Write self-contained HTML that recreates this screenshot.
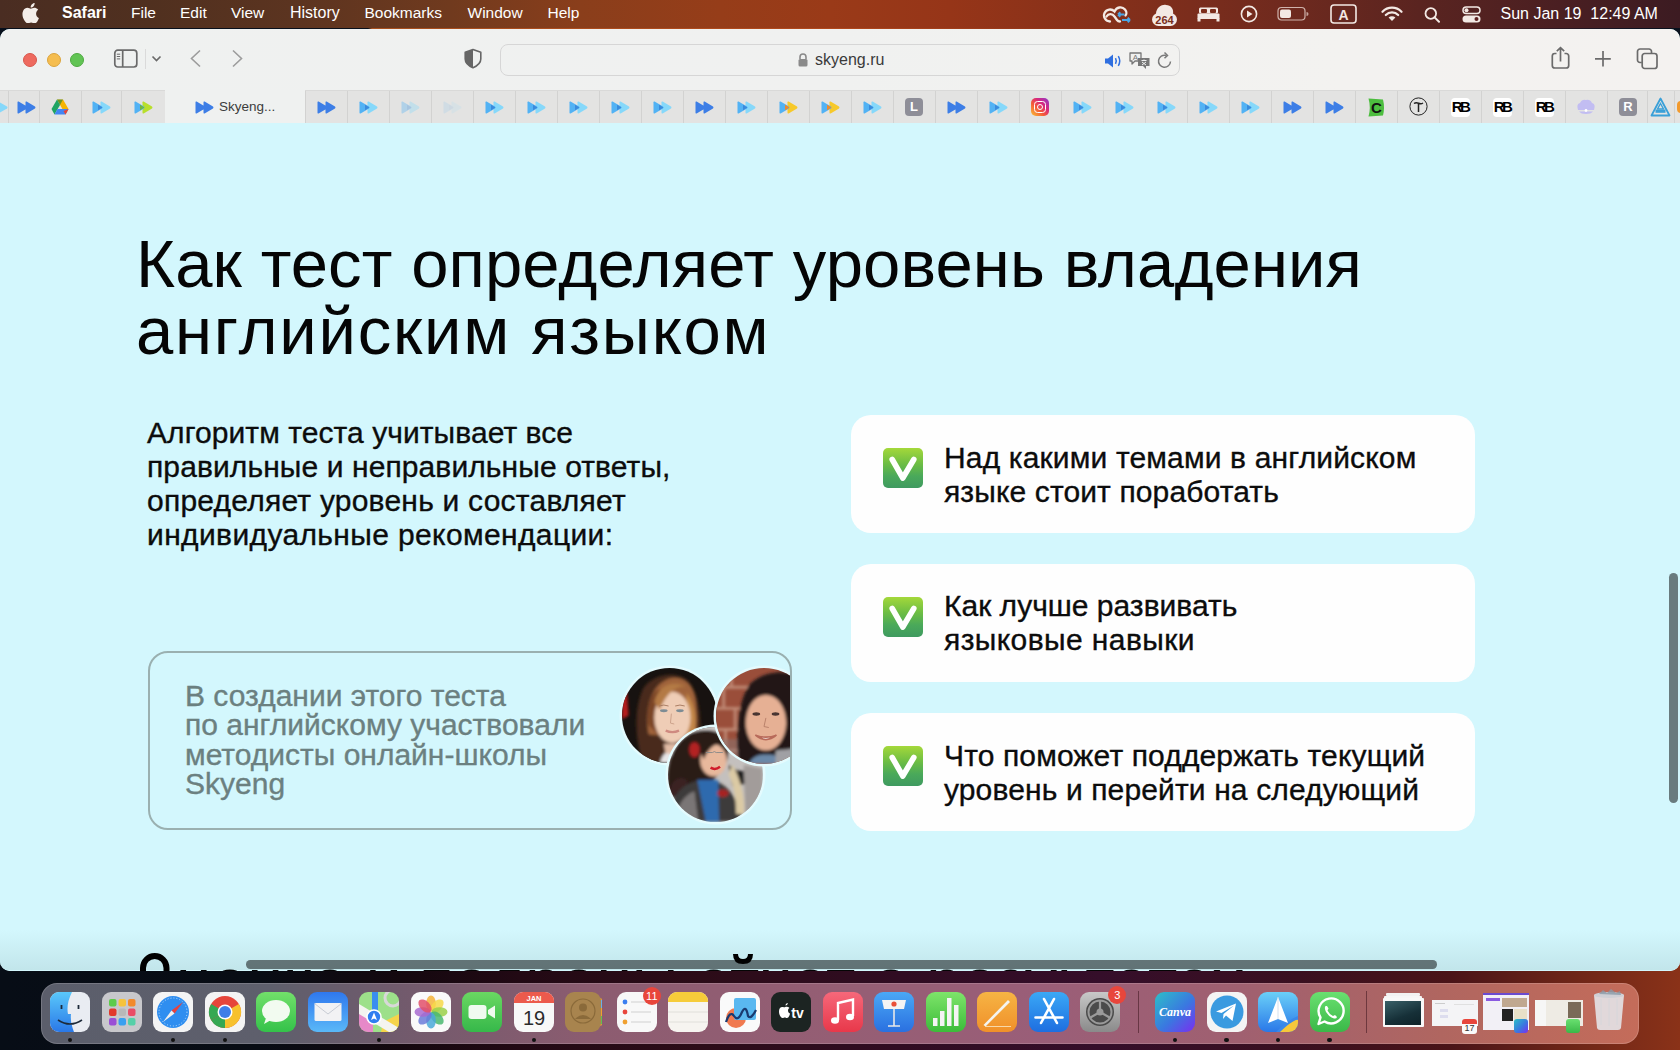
<!DOCTYPE html>
<html><head><meta charset="utf-8">
<style>
*{margin:0;padding:0;box-sizing:border-box}
html,body{width:1680px;height:1050px;overflow:hidden;font-family:"Liberation Sans",sans-serif}
body{position:relative;background:#0b121c}
.abs{position:absolute}
#wall{position:absolute;left:0;top:0;width:1680px;height:1050px;background:linear-gradient(90deg,#070d16 0px,#080c14 260px,#14080f 400px,#220914 520px,#2c0c18 700px,#300c22 900px,#350e2a 1100px,#3a1020 1300px,#4a1418 1450px,#6a2418 1560px,#8a3218 1680px)}
#menubar{position:absolute;left:0;top:0;width:1680px;height:28px;
 background:linear-gradient(90deg,#4a2d22 0px,#50301f 150px,#5c3420 300px,#703a1e 450px,#8a3e1b 580px,#963d19 720px,#9a3a18 830px,#963518 950px,#86301a 1100px,#702a1e 1280px,#5a2420 1420px,#4a1f22 1560px,#3c1b22 1680px);color:#fff;font-size:15.5px}
#menubar .m{position:absolute;top:4.3px;line-height:18px}
#win{position:absolute;left:0;top:29px;width:1680px;height:942px;border-radius:10px 10px 10px 10px;overflow:hidden;background:#d3f7fd}
#toolbar{position:absolute;left:0;top:0;width:1680px;height:61px;background:linear-gradient(90deg,#eff1f0,#f0f1f0 50%,#f3f2f0 80%,#f4f2f0)}
#tabbar{position:absolute;left:0;top:61px;width:1680px;height:33px;background:#e3e3e2;border-top:1px solid #d9d9d8}
#content{position:absolute;left:0;top:94px;width:1680px;height:848px;background:#d3f7fd;overflow:hidden}
#dock{position:absolute;left:41px;top:982.5px;width:1597.5px;height:61.5px;border-radius:16px;background:linear-gradient(90deg,#5b5e6b 0px,#5e5f6c 230px,#705a6c 350px,#8c5c70 550px,#955e74 800px,#9a5e78 1000px,#a06070 1200px,#b06660 1400px,#c46c5a 1597px);border:1px solid rgba(255,255,255,0.16);background-origin:border-box}

.h1{position:absolute;font-size:67px;line-height:67px;color:#050505;white-space:nowrap}
.p{position:absolute;font-size:30px;line-height:34px;color:#0c0c0c;-webkit-text-stroke:0.35px #0c0c0c;white-space:nowrap}
.card{position:absolute;width:624px;height:118px;border-radius:20px;background:#fefefe}
.chk{position:absolute;left:32px;top:33px;width:40px;height:40px;border-radius:5px;background:linear-gradient(180deg,#a4d83a 0%,#6cbd44 40%,#4aa95a 70%,#3f9a60 100%)}
.chk svg{position:absolute;left:0;top:0}
.ct{position:absolute;left:93px;top:25.6px;font-size:30px;line-height:34px;color:#0c0c0c;-webkit-text-stroke:0.35px #0c0c0c;white-space:nowrap}
.abox{position:absolute;width:644px;height:179px;border-radius:20px;border:2px solid #9ab0b0;overflow:hidden}
.at{position:absolute;left:35px;top:27.6px;-webkit-text-stroke:0.35px #6b8080;font-size:30px;line-height:29.5px;color:#6b8080;white-space:nowrap}
.ph{position:absolute;border-radius:50%;overflow:hidden;box-shadow:0 0 0 2.5px #e4fbfe}
</style></head>
<body>
<svg width="0" height="0" style="position:absolute"><defs>
<g id="ffd"><path d="M0.5 1.2 Q0.5 0 1.6 0.6 L10 5.6 Q11 6.5 10 7.4 L1.6 12.4 Q0.5 13 0.5 11.8 Z M8.5 1.2 Q8.5 0 9.6 0.6 L18 5.6 Q19 6.5 18 7.4 L9.6 12.4 Q8.5 13 8.5 11.8 Z" fill="#3d7ee6"/></g>
<g id="ffl"><path d="M8.5 1.2 Q8.5 0 9.6 0.6 L18 5.6 Q19 6.5 18 7.4 L9.6 12.4 Q8.5 13 8.5 11.8 Z" fill="#86d8fa"/><path d="M0.5 1.2 Q0.5 0 1.6 0.6 L10 5.6 Q11 6.5 10 7.4 L1.6 12.4 Q0.5 13 0.5 11.8 Z" fill="#52b2f4"/><path d="M6 3.8 L10.5 6.5 L6 9.2 Z" fill="#3a8bdc"/></g>
<g id="ffy"><path d="M8.5 1.2 Q8.5 0 9.6 0.6 L18 5.6 Q19 6.5 18 7.4 L9.6 12.4 Q8.5 13 8.5 11.8 Z" fill="#f7c92a"/><path d="M0.5 1.2 Q0.5 0 1.6 0.6 L10 5.6 Q11 6.5 10 7.4 L1.6 12.4 Q0.5 13 0.5 11.8 Z" fill="#52b2f4"/><path d="M6 3.8 L10.5 6.5 L6 9.2 Z" fill="#f08a2a"/></g>
<g id="ffg"><path d="M8.5 1.2 Q8.5 0 9.6 0.6 L18 5.6 Q19 6.5 18 7.4 L9.6 12.4 Q8.5 13 8.5 11.8 Z" fill="#b8df2c"/><path d="M0.5 1.2 Q0.5 0 1.6 0.6 L10 5.6 Q11 6.5 10 7.4 L1.6 12.4 Q0.5 13 0.5 11.8 Z" fill="#52b2f4"/><path d="M6 3.8 L10.5 6.5 L6 9.2 Z" fill="#6fb840"/></g>
</defs></svg>
<div id="wall"></div>
<div class="abs" style="left:0;top:26px;width:1680px;height:16px;background:linear-gradient(90deg,#08101c 0px,#08101c 368px,#a8501e 372px,#b0481c 840px,#8a3018 1100px,#5a2020 1450px,#101424 1630px,#08101c 1680px)"></div>
<div id="menubar">
 <svg class="abs" style="left:22px;top:3px" width="17" height="20" viewBox="0 0 17 20"><path fill="#f4eeea" d="M14.1 10.6c0-2.5 2-3.7 2.1-3.8-1.2-1.7-3-1.9-3.6-2-1.5-.2-3 .9-3.8.9-.8 0-2-.9-3.3-.9C3.8 4.9 2.2 5.9 1.3 7.4c-1.8 3.2-.5 7.9 1.3 10.4.9 1.2 1.9 2.6 3.2 2.6 1.3-.1 1.8-.8 3.3-.8 1.6 0 2 .8 3.4.8 1.400 0 2.300-1.300 3.100-2.500.9-1.400 1.300-2.700 1.300-2.800-.1 0-2.800-1-2.800-4.500zM11.600 3.200c.7-.9 1.200-2 1-3.200-1 0-2.200.7-2.900 1.500-.6.700-1.200 1.900-1 3 1.100.1 2.200-.5 2.900-1.300z"/></svg>
 <div class="m" style="left:62px;font-weight:bold;font-size:16px;top:4.2px">Safari</div>
 <div class="m" style="left:131px">File</div>
 <div class="m" style="left:180px">Edit</div>
 <div class="m" style="left:231px">View</div>
 <div class="m" style="left:290px;font-size:16px;top:4.2px">History</div>
 <div class="m" style="left:364.5px">Bookmarks</div>
 <div class="m" style="left:467.5px">Window</div>
 <div class="m" style="left:547.5px">Help</div>
 <!-- right icons -->
 <svg class="abs" style="left:1102px;top:4px" width="30" height="20" viewBox="0 0 30 20">
  <path d="M8 17.5 A6 6 0 1 1 12.5 7.5 C14.5 3 20 2 23 5.5 C25 8 24.5 10.5 23.5 11.5" fill="none" stroke="#f3e9e4" stroke-width="2.3" stroke-linecap="round"/>
  <path d="M4.5 12.5 C6.5 9 10.5 9.5 12.5 12.5 L15 16 C16 17.5 17 17.5 18 17.5" fill="none" stroke="#f3e9e4" stroke-width="2.3" stroke-linecap="round"/>
  <path d="M16 10.5 h6.5 M16 10.5 l2.3 -2.2 M16 10.5 l2.3 2.2" stroke="#4aa6e6" stroke-width="1.9" fill="none"/>
  <path d="M20 16 h8 M28 16 l-2.3 -2.2 M28 16 l-2.3 2.2" stroke="#4aa6e6" stroke-width="1.9" fill="none"/>
 </svg>
 <svg class="abs" style="left:1151px;top:4px" width="28" height="23" viewBox="0 0 28 23">
  <path d="M5 10 C5 3 12 0 15 1 C20 1 23 5 22 10 Z" fill="#f3e9e4"/>
  <rect x="1" y="9" width="25" height="13" rx="6.5" fill="#f3e9e4"/>
  <text x="13.5" y="19.5" text-anchor="middle" font-family="Liberation Sans" font-weight="bold" font-size="11" fill="#7a2e1c">264</text>
 </svg>
 <svg class="abs" style="left:1197px;top:7px" width="23" height="15" viewBox="0 0 23 15">
  <rect x="2" y="0.5" width="19" height="6" rx="1.5" fill="#f3e9e4"/>
  <rect x="4" y="2" width="6" height="4" rx="1" fill="#7c2e1c"/>
  <rect x="13" y="2" width="6" height="4" rx="1" fill="#7c2e1c"/>
  <rect x="0.5" y="6.5" width="22" height="5.5" rx="1" fill="#f3e9e4"/>
  <rect x="0.5" y="11" width="3" height="3.5" fill="#f3e9e4"/>
  <rect x="19.5" y="11" width="3" height="3.5" fill="#f3e9e4"/>
 </svg>
 <svg class="abs" style="left:1240px;top:5px" width="18" height="18" viewBox="0 0 18 18">
  <circle cx="9" cy="9" r="7.6" fill="none" stroke="#f3e9e4" stroke-width="1.6"/>
  <path d="M7 5.5 L12.5 9 L7 12.5 Z" fill="#f3e9e4"/>
 </svg>
 <svg class="abs" style="left:1277px;top:6px" width="33" height="16" viewBox="0 0 33 16">
  <rect x="1" y="1.5" width="27" height="12.5" rx="3.5" fill="none" stroke="#e9d6cf" stroke-opacity="0.8" stroke-width="1.2"/>
  <rect x="3" y="3.5" width="11" height="8.5" rx="2" fill="#f3e9e4"/>
  <path d="M29.5 6 a2 2 0 0 1 0 4 Z" fill="#e9d6cf" fill-opacity="0.7"/>
 </svg>
 <svg class="abs" style="left:1330px;top:4px" width="27" height="20" viewBox="0 0 27 20">
  <rect x="1" y="1" width="25" height="18" rx="3" fill="none" stroke="#f3e9e4" stroke-width="1.6"/>
  <text x="13.5" y="15.5" text-anchor="middle" font-family="Liberation Sans" font-weight="bold" font-size="14" fill="#f3e9e4">A</text>
 </svg>
 <svg class="abs" style="left:1381px;top:6px" width="22" height="16" viewBox="0 0 22 16">
  <path d="M1.5 5.8 A13 13 0 0 1 20.5 5.8" fill="none" stroke="#f3e9e4" stroke-width="2.2" stroke-linecap="round"/>
  <path d="M4.8 9 A8.5 8.5 0 0 1 17.2 9" fill="none" stroke="#f3e9e4" stroke-width="2.2" stroke-linecap="round"/>
  <path d="M11 15 L7.6 11.6 A4.8 4.8 0 0 1 14.4 11.6 Z" fill="#f3e9e4"/>
 </svg>
 <svg class="abs" style="left:1424px;top:7px" width="17" height="16" viewBox="0 0 17 16">
  <circle cx="6.8" cy="6.5" r="5.3" fill="none" stroke="#f3e9e4" stroke-width="1.8"/>
  <path d="M10.6 10.4 L15 14.8" stroke="#f3e9e4" stroke-width="2" stroke-linecap="round"/>
 </svg>
 <svg class="abs" style="left:1462px;top:6px" width="19" height="17" viewBox="0 0 19 17">
  <rect x="1" y="1" width="17" height="6.5" rx="3.25" fill="none" stroke="#f3e9e4" stroke-width="1.5"/>
  <circle cx="4.5" cy="4.25" r="2" fill="#f3e9e4"/>
  <rect x="0.5" y="9.5" width="18" height="7" rx="3.5" fill="#f3e9e4"/>
  <circle cx="14.5" cy="13" r="2" fill="#5e2020"/>
 </svg>
 <div class="m" style="left:1500.5px;font-size:16px;top:5px;white-space:pre">Sun Jan 19  12:49 AM</div>
</div>
<div id="win">
 <div id="toolbar">
  <div class="abs" style="left:23px;top:23.5px;width:14px;height:14px;border-radius:50%;background:#ee6a5f;border:0.5px solid #d8574c"></div>
  <div class="abs" style="left:46.5px;top:23.5px;width:14px;height:14px;border-radius:50%;background:#f5bd4f;border:0.5px solid #dba43c"></div>
  <div class="abs" style="left:70px;top:23.5px;width:14px;height:14px;border-radius:50%;background:#61c454;border:0.5px solid #4eaa41"></div>
  <svg class="abs" style="left:113px;top:20px" width="26" height="20" viewBox="0 0 26 20">
   <rect x="1.8" y="1.2" width="22" height="16.8" rx="3" fill="none" stroke="#6a6a6a" stroke-width="1.7"/>
   <path d="M9.7 1.2 V18" stroke="#6a6a6a" stroke-width="1.7"/>
   <path d="M3.8 5.2 H7.2 M3.8 7.5 H7.2 M3.8 9.9 H7.2" stroke="#6a6a6a" stroke-width="1"/>
  </svg>
  <div class="abs" style="left:145px;top:20px;width:1px;height:20px;background:#dadada"></div>
  <svg class="abs" style="left:151px;top:26px" width="11" height="8" viewBox="0 0 11 8"><path d="M1.5 1.5 L5.5 5.5 L9.5 1.5" fill="none" stroke="#6a6a6a" stroke-width="1.7"/></svg>
  <svg class="abs" style="left:189px;top:20px" width="13" height="19" viewBox="0 0 13 19"><path d="M11 1.5 L2.5 9.5 L11 17.5" fill="none" stroke="#9c9c9c" stroke-width="1.6"/></svg>
  <svg class="abs" style="left:231px;top:20px" width="13" height="19" viewBox="0 0 13 19"><path d="M2 1.5 L10.5 9.5 L2 17.5" fill="none" stroke="#9c9c9c" stroke-width="1.6"/></svg>
  <svg class="abs" style="left:463px;top:19px" width="20" height="21" viewBox="0 0 20 21">
   <path d="M10 1.5 L17.8 4.2 V11 C17.8 15 14 18 10 19.8 C6 18 2.2 15 2.2 11 V4.2 Z" fill="none" stroke="#666" stroke-width="1.6" stroke-linejoin="round"/>
   <path d="M10 1.5 L2.2 4.2 V11 C2.2 15 6 18 10 19.8 Z" fill="#666"/>
  </svg>
  <div class="abs" style="left:500px;top:14.5px;width:680px;height:32px;border-radius:8px;border:1.2px solid #d6d6d6;background:transparent"></div>
  <svg class="abs" style="left:797px;top:23px" width="12" height="16" viewBox="0 0 12 16">
   <path d="M3 7 V5 A3 3 0 0 1 9 5 V7" fill="none" stroke="#8a8a8a" stroke-width="1.6"/>
   <rect x="1.5" y="7" width="9" height="7.5" rx="1.5" fill="#8a8a8a"/>
  </svg>
  <div class="abs" style="left:815px;top:22px;font-size:16px;line-height:18px;color:#3a3a3a">skyeng.ru</div>
  <svg class="abs" style="left:1104px;top:23.5px" width="19" height="16" viewBox="0 0 19 16">
   <path d="M1 5.5 H4 L9 1.5 V14.5 L4 10.5 H1 Z" fill="#2f6fe0"/>
   <path d="M11.5 5.2 Q13 8 11.5 10.8" fill="none" stroke="#2f6fe0" stroke-width="1.5"/>
   <path d="M14.3 3.2 Q17.2 8 14.3 12.8" fill="none" stroke="#2f6fe0" stroke-width="1.5"/>
  </svg>
  <svg class="abs" style="left:1128px;top:21.5px" width="24" height="20" viewBox="0 0 24 20">
   <path d="M2 2 H13 V10 H7 L4 13 V10 H2 Z" fill="#f0f1f0" stroke="#777" stroke-width="1.3" stroke-linejoin="round"/>
   <text x="7.5" y="9" text-anchor="middle" font-family="Liberation Sans" font-size="8" fill="#777">A</text>
   <path d="M10 7 H21.5 V15 H18 V18 L15 15 H10 Z" fill="#777"/>
   <path d="M13.5 9.5 H18.5 M16 8.5 V10 M14 11 L18 14 M18 11 L14 14" stroke="#f0f1f0" stroke-width="1" fill="none"/>
  </svg>
  <svg class="abs" style="left:1156px;top:21.5px" width="18" height="20" viewBox="0 0 18 20">
   <path d="M14.5 10.5 A6 6 0 1 1 10 4.4" fill="none" stroke="#7a7a7a" stroke-width="1.5"/>
   <path d="M8.5 1.5 L11.5 4.4 L8.5 7.3" fill="none" stroke="#7a7a7a" stroke-width="1.5"/>
  </svg>
  <svg class="abs" style="left:1550px;top:17px" width="21" height="24" viewBox="0 0 21 24">
   <path d="M6.5 7.5 H4.8 A2.5 2.5 0 0 0 2.3 10 V19.5 A2.5 2.5 0 0 0 4.8 22 H16.2 A2.5 2.5 0 0 0 18.7 19.5 V10 A2.5 2.5 0 0 0 16.2 7.5 H14.5" fill="none" stroke="#6b6b6b" stroke-width="1.7"/>
   <path d="M10.5 15.5 V1.8 M6.8 5.2 L10.5 1.6 L14.2 5.2" fill="none" stroke="#6b6b6b" stroke-width="1.7"/>
  </svg>
  <svg class="abs" style="left:1594px;top:21px" width="18" height="18" viewBox="0 0 18 18"><path d="M9 1 V16.5 M1 8.8 H16.8" stroke="#6b6b6b" stroke-width="1.7"/></svg>
  <svg class="abs" style="left:1636px;top:18px" width="23" height="23" viewBox="0 0 23 23">
   <path d="M5.8 15.5 H4 A2.5 2.5 0 0 1 1.5 13 V4.5 A2.5 2.5 0 0 1 4 2 H13 A2.5 2.5 0 0 1 15.5 4.5 V6.2" fill="none" stroke="#6b6b6b" stroke-width="1.7"/>
   <rect x="6.2" y="6.5" width="14.8" height="15" rx="2.5" fill="none" stroke="#6b6b6b" stroke-width="1.7"/>
  </svg>
 </div>
 <div id="tabbar"><div class="abs" style="left:8px;top:0;width:1px;height:32px;background:#d2d2d1"></div><div class="abs" style="left:39px;top:0;width:1px;height:32px;background:#d2d2d1"></div><div class="abs" style="left:81px;top:0;width:1px;height:32px;background:#d2d2d1"></div><div class="abs" style="left:121px;top:0;width:1px;height:32px;background:#d2d2d1"></div><svg class="abs" style="left:-11px;top:9.5px" width="19" height="13" viewBox="0 0 19 13"><use href="#ffl"/></svg><svg class="abs" style="left:16.5px;top:9.5px;opacity:1" width="19" height="13" viewBox="0 0 19 13"><use href="#ffd"/></svg><svg class="abs" style="left:51px;top:7.5px" width="18" height="16" viewBox="0 0 18 16">
<path d="M6 0.5 H12 L17.5 10 L14.5 15.5 Z" fill="#f6b400"/><path d="M6 0.5 L0.5 10 L3.5 15.5 L9 6 Z" fill="#1fa463"/><path d="M3.5 15.5 H14.5 L17.5 10 H6.5 Z" fill="#4285f4"/><path d="M6 0.5 H12 L9 6 Z" fill="#188038" opacity="0.6"/><path d="M17.5 10 L14.5 15.5 L12.5 12 Z" fill="#ea4335"/></svg><svg class="abs" style="left:92.0px;top:9.5px;opacity:1" width="19" height="13" viewBox="0 0 19 13"><use href="#ffl"/></svg><svg class="abs" style="left:134.0px;top:9.5px;opacity:1" width="19" height="13" viewBox="0 0 19 13"><use href="#ffg"/></svg><div class="abs" style="left:165px;top:-1px;width:140px;height:34px;background:#eff1f0"></div><svg class="abs" style="left:194.5px;top:9.5px;opacity:1" width="19" height="13" viewBox="0 0 19 13"><use href="#ffd"/></svg><div class="abs" style="left:219px;top:7px;font-size:13.5px;line-height:18px;color:#3c3c3c">Skyeng...</div><div class="abs" style="left:305px;top:0;width:1px;height:32px;background:#d2d2d1"></div><svg class="abs" style="left:316.5px;top:9.5px;opacity:1" width="19" height="13" viewBox="0 0 19 13"><use href="#ffd"/></svg><div class="abs" style="left:347px;top:0;width:1px;height:32px;background:#d2d2d1"></div><svg class="abs" style="left:358.5px;top:9.5px;opacity:1" width="19" height="13" viewBox="0 0 19 13"><use href="#ffl"/></svg><div class="abs" style="left:389px;top:0;width:1px;height:32px;background:#d2d2d1"></div><svg class="abs" style="left:400.5px;top:9.5px;opacity:0.35" width="19" height="13" viewBox="0 0 19 13"><use href="#ffl"/></svg><div class="abs" style="left:431px;top:0;width:1px;height:32px;background:#d2d2d1"></div><svg class="abs" style="left:442.5px;top:9.5px;opacity:0.12" width="19" height="13" viewBox="0 0 19 13"><use href="#ffl"/></svg><div class="abs" style="left:473px;top:0;width:1px;height:32px;background:#d2d2d1"></div><svg class="abs" style="left:484.5px;top:9.5px;opacity:1" width="19" height="13" viewBox="0 0 19 13"><use href="#ffl"/></svg><div class="abs" style="left:515px;top:0;width:1px;height:32px;background:#d2d2d1"></div><svg class="abs" style="left:526.5px;top:9.5px;opacity:1" width="19" height="13" viewBox="0 0 19 13"><use href="#ffl"/></svg><div class="abs" style="left:557px;top:0;width:1px;height:32px;background:#d2d2d1"></div><svg class="abs" style="left:568.5px;top:9.5px;opacity:1" width="19" height="13" viewBox="0 0 19 13"><use href="#ffl"/></svg><div class="abs" style="left:599px;top:0;width:1px;height:32px;background:#d2d2d1"></div><svg class="abs" style="left:610.5px;top:9.5px;opacity:1" width="19" height="13" viewBox="0 0 19 13"><use href="#ffl"/></svg><div class="abs" style="left:641px;top:0;width:1px;height:32px;background:#d2d2d1"></div><svg class="abs" style="left:652.5px;top:9.5px;opacity:1" width="19" height="13" viewBox="0 0 19 13"><use href="#ffl"/></svg><div class="abs" style="left:683px;top:0;width:1px;height:32px;background:#d2d2d1"></div><svg class="abs" style="left:694.5px;top:9.5px;opacity:1" width="19" height="13" viewBox="0 0 19 13"><use href="#ffd"/></svg><div class="abs" style="left:725px;top:0;width:1px;height:32px;background:#d2d2d1"></div><svg class="abs" style="left:736.5px;top:9.5px;opacity:1" width="19" height="13" viewBox="0 0 19 13"><use href="#ffl"/></svg><div class="abs" style="left:767px;top:0;width:1px;height:32px;background:#d2d2d1"></div><svg class="abs" style="left:778.5px;top:9.5px;opacity:1" width="19" height="13" viewBox="0 0 19 13"><use href="#ffy"/></svg><div class="abs" style="left:809px;top:0;width:1px;height:32px;background:#d2d2d1"></div><svg class="abs" style="left:820.5px;top:9.5px;opacity:1" width="19" height="13" viewBox="0 0 19 13"><use href="#ffy"/></svg><div class="abs" style="left:851px;top:0;width:1px;height:32px;background:#d2d2d1"></div><svg class="abs" style="left:862.5px;top:9.5px;opacity:1" width="19" height="13" viewBox="0 0 19 13"><use href="#ffl"/></svg><div class="abs" style="left:893px;top:0;width:1px;height:32px;background:#d2d2d1"></div><div class="abs" style="left:905px;top:7px;width:18px;height:18px;border-radius:4px;background:#8e8e98;color:#fff;font-weight:bold;font-size:13px;line-height:18px;text-align:center">L</div><div class="abs" style="left:935px;top:0;width:1px;height:32px;background:#d2d2d1"></div><svg class="abs" style="left:946.5px;top:9.5px;opacity:1" width="19" height="13" viewBox="0 0 19 13"><use href="#ffd"/></svg><div class="abs" style="left:977px;top:0;width:1px;height:32px;background:#d2d2d1"></div><svg class="abs" style="left:988.5px;top:9.5px;opacity:1" width="19" height="13" viewBox="0 0 19 13"><use href="#ffl"/></svg><div class="abs" style="left:1019px;top:0;width:1px;height:32px;background:#d2d2d1"></div><div class="abs" style="left:1031px;top:7px;width:18px;height:18px;border-radius:5px;background:linear-gradient(45deg,#f9c234 0%,#f4563a 40%,#d6287f 65%,#8b3bcf 100%)"><div class="abs" style="left:3px;top:3px;width:12px;height:12px;border:1.6px solid #fff;border-radius:3.5px"></div><div class="abs" style="left:6px;top:6px;width:6px;height:6px;border:1.5px solid #fff;border-radius:50%"></div></div><div class="abs" style="left:1061px;top:0;width:1px;height:32px;background:#d2d2d1"></div><svg class="abs" style="left:1072.5px;top:9.5px;opacity:1" width="19" height="13" viewBox="0 0 19 13"><use href="#ffl"/></svg><div class="abs" style="left:1103px;top:0;width:1px;height:32px;background:#d2d2d1"></div><svg class="abs" style="left:1114.5px;top:9.5px;opacity:1" width="19" height="13" viewBox="0 0 19 13"><use href="#ffl"/></svg><div class="abs" style="left:1145px;top:0;width:1px;height:32px;background:#d2d2d1"></div><svg class="abs" style="left:1156.5px;top:9.5px;opacity:1" width="19" height="13" viewBox="0 0 19 13"><use href="#ffl"/></svg><div class="abs" style="left:1187px;top:0;width:1px;height:32px;background:#d2d2d1"></div><svg class="abs" style="left:1198.5px;top:9.5px;opacity:1" width="19" height="13" viewBox="0 0 19 13"><use href="#ffl"/></svg><div class="abs" style="left:1229px;top:0;width:1px;height:32px;background:#d2d2d1"></div><svg class="abs" style="left:1240.5px;top:9.5px;opacity:1" width="19" height="13" viewBox="0 0 19 13"><use href="#ffl"/></svg><div class="abs" style="left:1271px;top:0;width:1px;height:32px;background:#d2d2d1"></div><svg class="abs" style="left:1282.5px;top:9.5px;opacity:1" width="19" height="13" viewBox="0 0 19 13"><use href="#ffd"/></svg><div class="abs" style="left:1313px;top:0;width:1px;height:32px;background:#d2d2d1"></div><svg class="abs" style="left:1324.5px;top:9.5px;opacity:1" width="19" height="13" viewBox="0 0 19 13"><use href="#ffd"/></svg><div class="abs" style="left:1355px;top:0;width:1px;height:32px;background:#d2d2d1"></div><svg class="abs" style="left:1368px;top:6.5px" width="17" height="19" viewBox="0 0 17 19"><path d="M0.5 0.5 L15 1.5 Q17 9.5 15 17.5 L0.5 18.5 Q3 9.5 0.5 0.5 Z" fill="#4cbd3f"/><text x="8.3" y="15" text-anchor="middle" font-family="Liberation Sans" font-weight="bold" font-size="15" fill="#111">C</text></svg><div class="abs" style="left:1397px;top:0;width:1px;height:32px;background:#d2d2d1"></div><svg class="abs" style="left:1408.5px;top:6px" width="19" height="19" viewBox="0 0 19 19"><circle cx="9.5" cy="9.5" r="8.6" fill="none" stroke="#222" stroke-width="1"/><path d="M5 6.5 Q7 5 9.5 6.2 Q12 7.4 14 6 M9.5 6.2 V15" fill="none" stroke="#222" stroke-width="1.5"/></svg><div class="abs" style="left:1439px;top:0;width:1px;height:32px;background:#d2d2d1"></div><div class="abs" style="left:1450.5px;top:6.5px;width:19px;height:19px;border-radius:4px;background:#fff"></div><div class="abs" style="left:1451px;top:8px;width:18px;font-weight:bold;font-size:15px;line-height:16px;letter-spacing:-2.5px;color:#000;text-align:center">RB</div><div class="abs" style="left:1481px;top:0;width:1px;height:32px;background:#d2d2d1"></div><div class="abs" style="left:1492.5px;top:6.5px;width:19px;height:19px;border-radius:4px;background:#fff"></div><div class="abs" style="left:1493px;top:8px;width:18px;font-weight:bold;font-size:15px;line-height:16px;letter-spacing:-2.5px;color:#000;text-align:center">RB</div><div class="abs" style="left:1523px;top:0;width:1px;height:32px;background:#d2d2d1"></div><div class="abs" style="left:1534.5px;top:6.5px;width:19px;height:19px;border-radius:4px;background:#fff"></div><div class="abs" style="left:1535px;top:8px;width:18px;font-weight:bold;font-size:15px;line-height:16px;letter-spacing:-2.5px;color:#000;text-align:center">RB</div><div class="abs" style="left:1565px;top:0;width:1px;height:32px;background:#d2d2d1"></div><svg class="abs" style="left:1576px;top:8px" width="20" height="16" viewBox="0 0 20 16"><path d="M2 11 Q0 5 4 4 Q6 0 10 1 Q14 0 16 4 Q20 5 18 11 Z" fill="#c2bdf2"/><path d="M3 12.5 H17 Q15 15 10 15 Q5 15 3 12.5 Z" fill="#c2bdf2"/><circle cx="10" cy="11.5" r="1.4" fill="#fff"/></svg><div class="abs" style="left:1607px;top:0;width:1px;height:32px;background:#d2d2d1"></div><div class="abs" style="left:1619px;top:7px;width:18px;height:18px;border-radius:4px;background:#8e8e98;color:#fff;font-weight:bold;font-size:13px;line-height:18px;text-align:center">R</div><div class="abs" style="left:1647px;top:0;width:1px;height:32px;background:#d2d2d1"></div><svg class="abs" style="left:1650px;top:5.5px" width="21" height="20" viewBox="0 0 21 20"><path d="M10.5 1.5 L19.5 18.5 H1.5 Z" fill="none" stroke="#3aa0d8" stroke-width="1.8" stroke-linejoin="round"/><path d="M10.5 6.5 L13.5 12 H7.5 Z" fill="none" stroke="#3aa0d8" stroke-width="1.4"/><rect x="5.5" y="12.8" width="10" height="3" fill="#3aa0d8"/></svg><div class="abs" style="left:1674px;top:0;width:1px;height:32px;background:#d2d2d1"></div><div class="abs" style="left:1677px;top:10px;width:8px;height:12px;border-radius:4px;background:#f29a2e"></div></div>
 <div id="content"><div class="h1" style="left:136px;top:106.7px;letter-spacing:0.11px">Как тест определяет уровень владения</div>
<div class="h1" style="left:136px;top:173.9px;letter-spacing:1.75px">английским языком</div>
<div class="p" style="left:147px;top:292.8px"><span style="letter-spacing:0.07px">Алгоритм теста учитывает все</span><br><span style="letter-spacing:0.1px">правильные и неправильные ответы,</span><br><span style="letter-spacing:0.23px">определяет уровень и составляет</span><br><span style="letter-spacing:0.37px">индивидуальные рекомендации:</span></div>
<div class="card" style="left:851px;top:292px"><div class="chk"><svg width="40" height="40" viewBox="0 0 40 40"><path d="M9.2 11.5 L19.8 30 L30.8 11.5" fill="none" stroke="#fff" stroke-width="5.6" stroke-linecap="round" stroke-linejoin="round"/></svg></div><div class="ct"><span style="letter-spacing:0.15px">Над какими темами в английском</span><br><span style="letter-spacing:0.12px">языке стоит поработать</span></div></div>
<div class="card" style="left:851px;top:440.5px"><div class="chk"><svg width="40" height="40" viewBox="0 0 40 40"><path d="M9.2 11.5 L19.8 30 L30.8 11.5" fill="none" stroke="#fff" stroke-width="5.6" stroke-linecap="round" stroke-linejoin="round"/></svg></div><div class="ct">Как лучше развивать<br><span style="letter-spacing:0.4px">языковые навыки</span></div></div>
<div class="card" style="left:851px;top:590px"><div class="chk"><svg width="40" height="40" viewBox="0 0 40 40"><path d="M9.2 11.5 L19.8 30 L30.8 11.5" fill="none" stroke="#fff" stroke-width="5.6" stroke-linecap="round" stroke-linejoin="round"/></svg></div><div class="ct"><span style="letter-spacing:0.13px">Что поможет поддержать текущий</span><br><span style="letter-spacing:0.13px">уровень и перейти на следующий</span></div></div>
<div class="abox" style="left:148px;top:528px">
 <div class="ph" style="left:472px;top:14.5px;width:95px;height:95px;z-index:1"><svg width="100%" height="100%" viewBox="0 0 100 100">
<defs><filter id="b1" x="-20%" y="-20%" width="140%" height="140%"><feGaussianBlur stdDeviation="1.5"/></filter><filter id="b1s"><feGaussianBlur stdDeviation="0.7"/></filter></defs>
<rect width="100" height="100" fill="#171210"/>
<g filter="url(#b1)">
<path d="M0 28 L5 24 L7 50 L0 54 Z" fill="#b81c1c"/>
<path d="M22 100 C14 75 12 45 22 22 C32 6 58 2 70 14 C82 28 86 60 80 100 Z" fill="#4a2a1c"/>
<path d="M28 70 C24 42 30 18 50 11 C66 7 78 20 78 40 C80 58 78 72 72 84 L64 72 Z" fill="#a0643a"/>
<path d="M68 26 C78 40 80 58 74 80 L68 76 Z" fill="#c48848"/>
<path d="M28 60 C26 40 30 26 40 22 L38 70 Z" fill="#7a4426"/>
<ellipse cx="53" cy="52" rx="19" ry="27" fill="#efcdb6"/>
<path d="M34 36 C38 18 54 12 68 20 C62 18 48 22 40 44 Z" fill="#b47a44"/>
<path d="M40 100 C42 90 48 86 56 86 C66 86 74 90 78 100 Z" fill="#e8e6e8"/>
<path d="M44 80 L62 80 L60 90 L46 90 Z" fill="#e2bca6"/>
</g>
<g filter="url(#b1s)">
<ellipse cx="44" cy="45" rx="4" ry="1.5" fill="#7d8c94"/><ellipse cx="61" cy="45" rx="4" ry="1.5" fill="#7d8c94"/>
<path d="M39 40 Q44 38 49 40 M56 40 Q61 38 66 40" stroke="#a87a60" stroke-width="1" fill="none"/>
<path d="M46 66 Q53 69 60 66" stroke="#cf8a80" stroke-width="2.6" fill="none"/>
<path d="M52 48 L51 58 L55 59" stroke="#caa08a" stroke-width="1" fill="none"/>
</g>
</svg></div><div class="ph" style="left:518.1px;top:74.2px;width:94.6px;height:94.6px;z-index:2"><svg width="100%" height="100%" viewBox="0 0 100 100">
<defs><filter id="b3" x="-20%" y="-20%" width="140%" height="140%"><feGaussianBlur stdDeviation="1.5"/></filter><filter id="b3s"><feGaussianBlur stdDeviation="0.6"/></filter></defs>
<rect width="100" height="100" fill="#c4c0be"/>
<g filter="url(#b3)">
<path d="M0 0 H100 V30 H0 Z" fill="#d2cecc"/>
<path d="M0 70 C-4 40 6 8 32 4 C54 0 66 12 64 28 C62 44 50 56 30 70 Z" fill="#2a1a16"/>
<path d="M2 74 C0 60 10 50 20 56 L22 76 Z" fill="#3a2420"/>
<ellipse cx="48" cy="35" rx="14" ry="17" fill="#e8b89c"/>
<path d="M34 26 C36 10 54 6 62 18 C54 16 44 18 38 34 Z" fill="#2a1a16"/>
<ellipse cx="28" cy="24" rx="5.5" ry="8" fill="#b42020"/>
<path d="M64 40 C70 44 74 48 80 46 L84 60 L68 62 Z" fill="#1e1a1a"/>
<path d="M0 100 C2 70 18 56 40 56 C56 56 70 64 80 100 Z" fill="#3c3a3a"/>
<path d="M8 100 C10 80 18 72 28 68 L32 100 Z" fill="#7a7676"/>
<path d="M31 56 L40 100 H54 L53 56 Z" fill="#2e6aae"/>
<path d="M68 40 C78 56 82 80 80 92 L72 92 C72 78 70 62 64 50 Z" fill="#dccaa4"/>
<path d="M80 40 L100 44 V100 H82 Z" fill="#a29c9a"/>
<ellipse cx="58" cy="70" rx="6" ry="4" fill="#a82222"/>
</g>
<g filter="url(#b3s)">
<path d="M40 27 H47 M51 27 H58 M47 27 Q49 25 51 27" stroke="#8a8a8a" stroke-width="1" fill="none"/>
<path d="M45 43 Q50 46 55 42" stroke="#d01a2a" stroke-width="2.6" fill="none"/>
</g>
</svg></div><div class="ph" style="left:566px;top:14.5px;width:96px;height:96px;z-index:3"><svg width="100%" height="100%" viewBox="0 0 100 100">
<defs><filter id="b2" x="-20%" y="-20%" width="140%" height="140%"><feGaussianBlur stdDeviation="1.5"/></filter><filter id="b2s"><feGaussianBlur stdDeviation="0.7"/></filter></defs>
<rect width="100" height="100" fill="#9a4e3a"/>
<g filter="url(#b2)">
<path d="M0 20 H34 M0 42 H30 M0 64 H30 M0 86 H32 M16 0 V20 M8 20 V42 M20 42 V64 M10 64 V86" stroke="#c08a76" stroke-width="3"/>
<rect x="0" y="74" width="34" height="26" fill="#8a7a78" opacity="0.5"/>
<path d="M24 100 C20 72 22 34 36 16 C50 2 80 0 94 14 C100 24 100 60 100 100 Z" fill="#231619"/>
<ellipse cx="52" cy="57" rx="21" ry="29" fill="#e6b094"/>
<path d="M30 44 C30 22 48 10 70 12 C84 16 90 30 88 48 C80 28 62 22 40 30 C36 34 33 40 32 48 Z" fill="#231619"/>
<path d="M34 100 C38 92 44 90 52 90 C62 90 70 92 74 100 Z" fill="#6a88a8"/>
<path d="M62 86 L100 82 V100 H62 Z" fill="#a0a0a4"/>
</g>
<g filter="url(#b2s)">
<ellipse cx="42" cy="48" rx="4" ry="1.8" fill="#4a3430"/><ellipse cx="62" cy="48" rx="4" ry="1.8" fill="#4a3430"/>
<path d="M41 70 Q52 79 63 70 Q52 74 41 70 Z" fill="#f8f0ea" stroke="#b86a5a" stroke-width="1.8"/>
<path d="M52 52 L50 61 L55 62" stroke="#b8806a" stroke-width="1" fill="none"/>
</g>
</svg></div><div class="at">В создании этого теста<br>по английскому участвовали<br>методисты онлайн-школы<br>Skyeng</div>
</div>



<div class="abs" style="left:0;top:807px;width:1680px;height:40px;background:linear-gradient(180deg,rgba(180,215,220,0) 0%,rgba(180,215,220,0.55) 100%)"></div>
<div class="h1" style="left:176px;top:826.6px;font-size:64px;line-height:64px">ценка и подроны отчет о резуьтатах</div><svg class="abs" style="left:139px;top:829px" width="32" height="20" viewBox="0 0 32 20"><path d="M4 20 V16 A11.75 12 0 0 1 27.5 16 V20" fill="none" stroke="#000" stroke-width="6"/></svg><svg class="abs" style="left:732px;top:830px" width="22" height="12" viewBox="0 0 22 12"><path d="M3.5 1 Q3.5 8.5 11 8.5 Q18.5 8.5 18.5 1" fill="none" stroke="#000" stroke-width="5"/></svg>
<div class="abs" style="left:246px;top:837.2px;width:1191px;height:8.4px;border-radius:4.2px;background:rgba(0,0,0,0.5)"></div>
<div class="abs" style="left:1669px;top:449.6px;width:9px;height:230.4px;border-radius:4.5px;background:rgba(0,0,0,0.5)"></div></div>
</div>
<div id="dock"></div>
<svg class="abs" style="left:50.3px;top:991.5px" width="40" height="40" viewBox="0 0 40 40"><defs><clipPath id="cf"><rect width="40" height="40" rx="9"/></clipPath><linearGradient id="gfd" x1="0" y1="0" x2="0" y2="1"><stop offset="0" stop-color="#5ac8fa"/><stop offset="1" stop-color="#2a78e8"/></linearGradient></defs>
<g clip-path="url(#cf)"><rect width="40" height="40" fill="#e9ecf2"/><path d="M0 0 H22 Q16 12 18 22 H21 Q20 30 24 40 H0 Z" fill="url(#gfd)"/></g>
<path d="M8 28 Q20 36 32 28" stroke="#1d2a3a" stroke-width="1.6" fill="none"/><path d="M11.5 13 V17 M28.5 13 V17" stroke="#1d2a3a" stroke-width="1.8"/></svg>
<div class="abs" style="left:68.1px;top:1037.5px;width:4.4px;height:4.4px;border-radius:50%;background:#111"></div>
<svg class="abs" style="left:101.8px;top:991.5px" width="40" height="40" viewBox="0 0 40 40"><rect width="40" height="40" rx="9" fill="#c8c8cc"/><rect x="7.0" y="7.0" width="7.5" height="7.5" rx="2" fill="#5ecb4a"/><rect x="16.5" y="7.0" width="7.5" height="7.5" rx="2" fill="#f6c33c"/><rect x="26.0" y="7.0" width="7.5" height="7.5" rx="2" fill="#f28a2c"/><rect x="7.0" y="16.5" width="7.5" height="7.5" rx="2" fill="#e2382c"/><rect x="16.5" y="16.5" width="7.5" height="7.5" rx="2" fill="#b8b8b8"/><rect x="26.0" y="16.5" width="7.5" height="7.5" rx="2" fill="#ea4d66"/><rect x="7.0" y="26.0" width="7.5" height="7.5" rx="2" fill="#9a4fd6"/><rect x="16.5" y="26.0" width="7.5" height="7.5" rx="2" fill="#3aa0f0"/><rect x="26.0" y="26.0" width="7.5" height="7.5" rx="2" fill="#56d0a8"/></svg>
<svg class="abs" style="left:153.3px;top:991.5px" width="40" height="40" viewBox="0 0 40 40"><rect width="40" height="40" rx="9" fill="#f4f4f4"/><circle cx="20" cy="20" r="16" fill="#2f8ef0"/><circle cx="20" cy="20" r="14" fill="none" stroke="#bfe0fb" stroke-width="1" stroke-dasharray="1 2"/><path d="M30 10 L21.5 21.5 L18.5 18.5 Z" fill="#e8413c"/><path d="M10 30 L18.5 18.5 L21.5 21.5 Z" fill="#f0f0f0"/></svg>
<div class="abs" style="left:171.1px;top:1037.5px;width:4.4px;height:4.4px;border-radius:50%;background:#111"></div>
<svg class="abs" style="left:204.8px;top:991.5px" width="40" height="40" viewBox="0 0 40 40"><rect width="40" height="40" rx="9" fill="#f4f4f4"/><circle cx="20" cy="20" r="16" fill="#e6453a"/><path d="M20 20 L6.1 28 A16 16 0 0 0 20 36 Z" fill="#35a853"/><path d="M20 20 L6.1 28 A16 16 0 0 1 6.1 12 Z" fill="#35a853"/><path d="M20 20 L33.9 12 A16 16 0 0 1 20 36 Z" fill="#f7c12e"/><circle cx="20" cy="20" r="7.5" fill="#fff"/><circle cx="20" cy="20" r="6" fill="#3f7ee8"/></svg>
<div class="abs" style="left:222.6px;top:1037.5px;width:4.4px;height:4.4px;border-radius:50%;background:#111"></div>
<svg class="abs" style="left:256.3px;top:991.5px" width="40" height="40" viewBox="0 0 40 40"><defs><linearGradient id="gms" x1="0" y1="0" x2="0" y2="1"><stop offset="0" stop-color="#72e06a"/><stop offset="1" stop-color="#34c24a"/></linearGradient></defs><rect width="40" height="40" rx="9" fill="url(#gms)"/><ellipse cx="20" cy="19" rx="14" ry="11" fill="#f2fbf0"/><path d="M10 26 L8 32 L15 28 Z" fill="#f2fbf0"/></svg>
<svg class="abs" style="left:307.8px;top:991.5px" width="40" height="40" viewBox="0 0 40 40"><defs><linearGradient id="gml" x1="0" y1="0" x2="0" y2="1"><stop offset="0" stop-color="#2f78ee"/><stop offset="1" stop-color="#5ab8f8"/></linearGradient></defs><rect width="40" height="40" rx="9" fill="url(#gml)"/><rect x="6.5" y="11" width="27" height="18" rx="1.5" fill="#f2f2f4"/><path d="M6.5 11.5 L20 22 L33.5 11.5" fill="none" stroke="#c8ccd4" stroke-width="1"/></svg>
<svg class="abs" style="left:359.3px;top:991.5px" width="40" height="40" viewBox="0 0 40 40"><defs><clipPath id="cmp"><rect width="40" height="40" rx="9"/></clipPath></defs><g clip-path="url(#cmp)"><rect width="40" height="40" fill="#9de08a"/><path d="M0 20 L14 30 L14 40 H0 Z" fill="#e688c8"/><path d="M24 30 L40 22 V40 H22 Z" fill="#f6d44a"/><path d="M0 12 L40 36 V40 H30 L0 22 Z" fill="#f4f4f0"/><rect x="13" y="0" width="6" height="22" fill="#3a8ef0"/><circle cx="34" cy="6" r="8" fill="none" stroke="#d8d8d8" stroke-width="3"/></g><circle cx="15" cy="25" r="7" fill="#2f7ef0" stroke="#fff" stroke-width="1.6"/><path d="M15 20.5 L18 28 L15 26.5 L12 28 Z" fill="#fff"/></svg>
<div class="abs" style="left:377.1px;top:1037.5px;width:4.4px;height:4.4px;border-radius:50%;background:#111"></div>
<svg class="abs" style="left:410.8px;top:991.5px" width="40" height="40" viewBox="0 0 40 40"><rect width="40" height="40" rx="9" fill="#fafafa"/><ellipse cx="20" cy="11.5" rx="4.8" ry="8" fill="#f4b43a" opacity="0.85" transform="rotate(0 20 20)"/><ellipse cx="20" cy="11.5" rx="4.8" ry="8" fill="#f7d84a" opacity="0.85" transform="rotate(45 20 20)"/><ellipse cx="20" cy="11.5" rx="4.8" ry="8" fill="#9bd04a" opacity="0.85" transform="rotate(90 20 20)"/><ellipse cx="20" cy="11.5" rx="4.8" ry="8" fill="#4ab870" opacity="0.85" transform="rotate(135 20 20)"/><ellipse cx="20" cy="11.5" rx="4.8" ry="8" fill="#4aa8d8" opacity="0.85" transform="rotate(180 20 20)"/><ellipse cx="20" cy="11.5" rx="4.8" ry="8" fill="#6a7ad8" opacity="0.85" transform="rotate(225 20 20)"/><ellipse cx="20" cy="11.5" rx="4.8" ry="8" fill="#a86ad0" opacity="0.85" transform="rotate(270 20 20)"/><ellipse cx="20" cy="11.5" rx="4.8" ry="8" fill="#e2506a" opacity="0.85" transform="rotate(315 20 20)"/></svg>
<svg class="abs" style="left:462.3px;top:991.5px" width="40" height="40" viewBox="0 0 40 40"><defs><linearGradient id="gft" x1="0" y1="0" x2="0" y2="1"><stop offset="0" stop-color="#6ad862"/><stop offset="1" stop-color="#36b84a"/></linearGradient></defs><rect width="40" height="40" rx="9" fill="url(#gft)"/><rect x="6.5" y="13" width="18" height="14" rx="3" fill="#f0faf0"/><path d="M26 18 L33 13.5 V26.5 L26 22 Z" fill="#f0faf0"/></svg>
<svg class="abs" style="left:513.8px;top:991.5px" width="40" height="40" viewBox="0 0 40 40"><defs><clipPath id="ccl"><rect width="40" height="40" rx="9"/></clipPath></defs><g clip-path="url(#ccl)"><rect width="40" height="40" fill="#f8f8f8"/><rect width="40" height="11" fill="#ec5a4c"/></g><text x="20" y="9" text-anchor="middle" font-family="Liberation Sans" font-weight="bold" font-size="7.5" fill="#fff">JAN</text><text x="20" y="33" text-anchor="middle" font-family="Liberation Sans" font-size="20" fill="#2a2a2a">19</text></svg>
<div class="abs" style="left:531.6px;top:1037.5px;width:4.4px;height:4.4px;border-radius:50%;background:#111"></div>
<svg class="abs" style="left:565.3px;top:991.5px" width="40" height="40" viewBox="0 0 40 40"><rect x="32" y="6" width="5" height="28" rx="2" fill="#f0a030"/><rect x="32" y="8" width="5" height="8" fill="#6ab0e8"/><rect x="32" y="24" width="5" height="8" fill="#62c050"/><rect x="0" y="0" width="36" height="40" rx="9" fill="#a8844e"/><circle cx="18" cy="19" r="12" fill="none" stroke="#8a6a3a" stroke-width="1.2"/><circle cx="18" cy="15.5" r="4" fill="#8a6a3a"/><path d="M10 27 Q18 19 26 27" fill="#8a6a3a"/></svg>
<svg class="abs" style="left:616.8px;top:991.5px" width="40" height="40" viewBox="0 0 40 40"><rect width="40" height="40" rx="9" fill="#f8f8f8"/><circle cx="8" cy="10" r="2.4" fill="#3a7ef0"/><circle cx="8" cy="20" r="2.4" fill="#e8463c"/><circle cx="8" cy="30" r="2.4" fill="#f0a030"/><path d="M14 10 H34 M14 20 H34 M14 30 H34" stroke="#d0d0d0" stroke-width="1"/></svg>
<div class="abs" style="left:642.8px;top:987px;width:18px;height:18px;border-radius:50%;background:#e8463c;color:#fff;font-size:11px;line-height:18px;text-align:center">11</div>
<svg class="abs" style="left:668.3px;top:991.5px" width="40" height="40" viewBox="0 0 40 40"><defs><clipPath id="cnt"><rect width="40" height="40" rx="9"/></clipPath></defs><g clip-path="url(#cnt)"><rect width="40" height="40" fill="#f6f4f0"/><rect width="40" height="10" fill="#f6cc3a"/><path d="M0 20 H40 M0 30 H40" stroke="#dcdad4" stroke-width="0.8"/></g></svg>
<svg class="abs" style="left:719.8px;top:991.5px" width="40" height="40" viewBox="0 0 40 40"><rect width="40" height="40" rx="9" fill="#fafafa"/><circle cx="16" cy="26" r="10" fill="#f07a50"/><rect x="14" y="6" width="22" height="22" rx="2" fill="#5ab8f0"/><path d="M6 30 Q10 18 14 24 Q18 30 22 20 Q26 12 28 24 Q31 28 36 18" fill="none" stroke="#1a3a70" stroke-width="2.2"/></svg>
<svg class="abs" style="left:771.3px;top:991.5px" width="40" height="40" viewBox="0 0 40 40"><rect width="40" height="40" rx="9" fill="#1c2422"/><text x="26.5" y="25.5" text-anchor="middle" font-family="Liberation Sans" font-weight="bold" font-size="14" fill="#fff">tv</text><path d="M11.5 15 C9 15 8 17 8 19.5 C8 23 10 26 11.5 26 C12.5 26 13 25.5 13.8 25.5 C14.6 25.5 15 26 16 26 C17.5 26 19 23 19 21.5 C17.5 21 17 19.5 17 18.5 C17 17 18 16.3 18.5 16 C17.5 14.8 16 14.8 15.5 14.8 C14.5 14.8 14 15.3 13.5 15.3 C13 15.3 12.5 15 11.5 15 Z M15 12 C15.5 11.3 16.3 11 16.8 11 C16.8 12 16 13.5 14.5 13.5 C14.5 13 14.6 12.5 15 12 Z" fill="#fff"/></svg>
<svg class="abs" style="left:822.8px;top:991.5px" width="40" height="40" viewBox="0 0 40 40"><defs><linearGradient id="gmu" x1="0" y1="0" x2="0" y2="1"><stop offset="0" stop-color="#f6687a"/><stop offset="1" stop-color="#e8384a"/></linearGradient></defs><rect width="40" height="40" rx="9" fill="url(#gmu)"/><path d="M15 28 V11 L30 7.5 V24" fill="none" stroke="#fff" stroke-width="2.4"/><ellipse cx="12" cy="28.5" rx="4" ry="3.2" fill="#fff"/><ellipse cx="27" cy="25" rx="4" ry="3.2" fill="#fff"/></svg>
<svg class="abs" style="left:874.3px;top:991.5px" width="40" height="40" viewBox="0 0 40 40"><defs><linearGradient id="gkn" x1="0" y1="0" x2="0" y2="1"><stop offset="0" stop-color="#4aa8f6"/><stop offset="1" stop-color="#2a70e0"/></linearGradient></defs><rect width="40" height="40" rx="9" fill="url(#gkn)"/><path d="M8 8 H32 L30 17 H10 Z" fill="#f4f4f4"/><circle cx="20" cy="12" r="2.6" fill="#e8503a"/><path d="M20 17 V34 M14 34 H26" stroke="#e8e8e8" stroke-width="1.6"/></svg>
<svg class="abs" style="left:925.8px;top:991.5px" width="40" height="40" viewBox="0 0 40 40"><defs><linearGradient id="gnm" x1="0" y1="0" x2="0" y2="1"><stop offset="0" stop-color="#7ee46a"/><stop offset="1" stop-color="#3cbc3a"/></linearGradient></defs><rect width="40" height="40" rx="9" fill="url(#gnm)"/><rect x="7" y="26" width="4.5" height="8" fill="#f4f4f4"/><rect x="14" y="19" width="4.5" height="15" fill="#f4f4f4"/><rect x="21" y="6" width="4.5" height="28" fill="#f4f4f4"/><rect x="28" y="13" width="4.5" height="21" fill="#f4f4f4"/></svg>
<svg class="abs" style="left:977.3px;top:991.5px" width="40" height="40" viewBox="0 0 40 40"><defs><linearGradient id="gpg" x1="0" y1="0" x2="0" y2="1"><stop offset="0" stop-color="#f6b444"/><stop offset="1" stop-color="#f0902a"/></linearGradient></defs><rect width="40" height="40" rx="9" fill="url(#gpg)"/><path d="M6.5 33 L31 8 L33 10 L8.5 34.5 Z" fill="#f4f4f0"/><path d="M8 34.5 H34" stroke="#f8d8a8" stroke-width="1"/></svg>
<svg class="abs" style="left:1028.8px;top:991.5px" width="40" height="40" viewBox="0 0 40 40"><defs><linearGradient id="gas" x1="0" y1="0" x2="0" y2="1"><stop offset="0" stop-color="#3aa8f6"/><stop offset="1" stop-color="#1e6ee0"/></linearGradient></defs><rect width="40" height="40" rx="9" fill="url(#gas)"/><path d="M15 7 L28 31 M25 7 L12 31 M6.5 25.5 H33.5" stroke="#fff" stroke-width="2.6" stroke-linecap="round"/></svg>
<svg class="abs" style="left:1080.3px;top:991.5px" width="40" height="40" viewBox="0 0 40 40"><defs><linearGradient id="gst" x1="0" y1="0" x2="0" y2="1"><stop offset="0" stop-color="#c8c8c8"/><stop offset="1" stop-color="#8a8a8a"/></linearGradient></defs><rect width="40" height="40" rx="9" fill="url(#gst)"/><circle cx="20" cy="20" r="14" fill="#4a4a4a"/><circle cx="20" cy="20" r="11.5" fill="none" stroke="#9a9a9a" stroke-width="2"/><circle cx="20" cy="20" r="3.5" fill="#9a9a9a"/><path d="M20 20 V9 M20 20 L10.5 25.5 M20 20 L29.5 25.5" stroke="#9a9a9a" stroke-width="2.2"/></svg>
<div class="abs" style="left:1108.3px;top:986px;width:18px;height:18px;border-radius:50%;background:#e8463c;color:#fff;font-size:11px;line-height:18px;text-align:center">3</div>
<div class="abs" style="left:1138px;top:991px;width:1px;height:42px;background:rgba(60,20,30,0.55)"></div>
<svg class="abs" style="left:1155.0px;top:991.5px" width="40" height="40" viewBox="0 0 40 40"><defs><linearGradient id="gcv" x1="0" y1="0" x2="1" y2="1"><stop offset="0" stop-color="#2cc0c8"/><stop offset="0.55" stop-color="#3a78e0"/><stop offset="1" stop-color="#7a2ef0"/></linearGradient></defs><rect width="40" height="40" rx="9" fill="url(#gcv)"/><text x="20" y="24" text-anchor="middle" font-family="Liberation Serif" font-style="italic" font-weight="bold" font-size="12" fill="#fff">Canva</text></svg>
<div class="abs" style="left:1172.8px;top:1037.5px;width:4.4px;height:4.4px;border-radius:50%;background:#111"></div>
<svg class="abs" style="left:1206.5px;top:991.5px" width="40" height="40" viewBox="0 0 40 40"><rect width="40" height="40" rx="9" fill="#f4f4f4"/><circle cx="20" cy="20" r="16.5" fill="#3a9ae0"/><path d="M9 19.5 L29 11.5 L25.5 29 L19 23.5 L16 27 L16.5 22 L27 13.5 L14.5 21 Z" fill="#fff"/></svg>
<div class="abs" style="left:1224.3px;top:1037.5px;width:4.4px;height:4.4px;border-radius:50%;background:#111"></div>
<svg class="abs" style="left:1258.0px;top:991.5px" width="40" height="40" viewBox="0 0 40 40"><defs><clipPath id="csp"><rect width="40" height="40" rx="9"/></clipPath><linearGradient id="gsp" x1="0" y1="0" x2="0" y2="1"><stop offset="0" stop-color="#6ad0f8"/><stop offset="1" stop-color="#2a78e8"/></linearGradient></defs><g clip-path="url(#csp)"><rect width="40" height="40" fill="url(#gsp)"/><path d="M20 40 Q34 26 40 28 V40 Z" fill="#f6c83a"/><path d="M18 40 Q30 28 40 24 V27 Q32 30 22 40 Z" fill="#3a88e8"/></g><path d="M20 5 L30 31 L20 27 L10 31 Z" fill="#fff"/><path d="M20 5 V27" stroke="#c8d8e8" stroke-width="0.8"/></svg>
<div class="abs" style="left:1275.8px;top:1037.5px;width:4.4px;height:4.4px;border-radius:50%;background:#111"></div>
<svg class="abs" style="left:1309.5px;top:991.5px" width="40" height="40" viewBox="0 0 40 40"><defs><linearGradient id="gwa" x1="0" y1="0" x2="0" y2="1"><stop offset="0" stop-color="#6ae070"/><stop offset="1" stop-color="#3ab848"/></linearGradient></defs><rect width="40" height="40" rx="9" fill="url(#gwa)"/><path d="M8.5 32 L10.5 25.5 A12.5 12.5 0 1 1 14.5 29.5 Z" fill="none" stroke="#fff" stroke-width="2.4" stroke-linejoin="round"/><path d="M15.5 14 Q14 16 16 20 Q19 25 24 26.5 Q26.5 27 27 25 L25 23 L23 24 Q19.5 22.5 17.5 18.5 L18.5 16.5 L17 14 Z" fill="#fff"/></svg>
<div class="abs" style="left:1327.3px;top:1037.5px;width:4.4px;height:4.4px;border-radius:50%;background:#111"></div>
<div class="abs" style="left:1366px;top:991px;width:1px;height:42px;background:rgba(60,20,30,0.55)"></div>
<div class="abs" style="left:1386px;top:993px;width:34px;height:3px;background:#f2f2f2;border-radius:1px"></div><div class="abs" style="left:1384px;top:995.5px;width:38px;height:3px;background:#f6f6f6;border-radius:1px"></div><div class="abs" style="left:1382.5px;top:998px;width:41px;height:29px;background:#f8f8f8;border-radius:1px"></div><div class="abs" style="left:1385px;top:1000.5px;width:36px;height:24px;background:linear-gradient(160deg,#3a6068,#163038 60%,#0e2228)"></div>
<div class="abs" style="left:1431.5px;top:1000px;width:46px;height:26px;background:#f4f4f6"><div class="abs" style="left:3px;top:3px;width:10px;height:1px;background:#ccc"></div><div class="abs" style="left:8px;top:9px;width:8px;height:3px;background:#dde"></div><div class="abs" style="left:8px;top:15px;width:8px;height:3px;background:#dde"></div><div class="abs" style="left:22px;top:4px;width:20px;height:1px;background:#e0e0e0"></div></div><div class="abs" style="left:1462px;top:1019px;width:15px;height:15px;border-radius:3px;background:#fafafa;overflow:hidden"><div style="height:5px;background:#e8463c"></div><div style="font-size:9px;line-height:9px;text-align:center;color:#333">17</div></div>
<div class="abs" style="left:1482.5px;top:993px;width:46.5px;height:37px;background:#f2f0f6"><div class="abs" style="left:0;top:0;width:46.5px;height:2px;background:#6a4ad0"></div><div class="abs" style="left:3px;top:5px;width:14px;height:3px;background:#8a5ae0"></div><div class="abs" style="left:19px;top:5px;width:25px;height:9px;background:#c0a890"></div><div class="abs" style="left:19px;top:16px;width:11px;height:12px;background:#222"></div><div class="abs" style="left:31px;top:16px;width:13px;height:12px;background:#e8e0c8"></div></div><div class="abs" style="left:1514px;top:1018.5px;width:14px;height:14px;border-radius:3px;background:linear-gradient(135deg,#2cc0c8,#3a78e0 55%,#7a2ef0)"></div>
<div class="abs" style="left:1535px;top:1000px;width:47.5px;height:26px;background:#eeebe4"><div class="abs" style="left:0;top:0;width:11px;height:26px;background:#f6f6f6"></div><div class="abs" style="left:33px;top:2px;width:13px;height:16px;background:#7a6a58"></div></div><div class="abs" style="left:1566px;top:1018.5px;width:14px;height:14px;border-radius:3px;background:linear-gradient(#6ae070,#3ab848)"></div>
<svg class="abs" style="left:1591px;top:987px" width="36" height="44" viewBox="0 0 36 44"><path d="M3 8 H33 L30 41 Q29.5 43 27 43 H9 Q6.5 43 6 41 Z" fill="#e4e4e8" opacity="0.9"/><ellipse cx="18" cy="8" rx="15" ry="3" fill="#d0d0d6"/><path d="M8 7 L12 3 L16 6 L20 2 L25 6 L29 4 L30 8 Z" fill="#8a9aa8" opacity="0.8"/><path d="M10 12 V38 M18 12 V39 M26 12 V38" stroke="#d6d6da" stroke-width="1"/></svg>
</body></html>
